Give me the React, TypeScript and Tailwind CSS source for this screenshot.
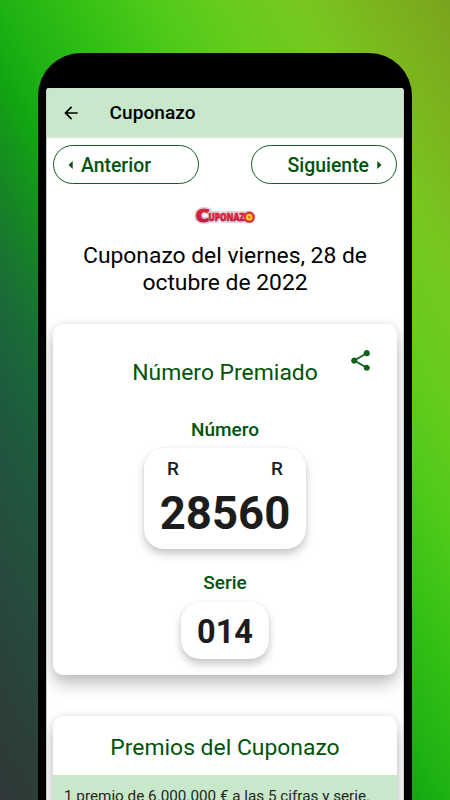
import { MdArrowBack, MdShare } from "react-icons/md";

const cardShadow = "shadow-[0_9px_16px_rgba(0,0,0,0.24),0_0_8px_rgba(0,0,0,0.08)]";
const boxShadow = "shadow-[0_5px_9px_rgba(0,0,0,0.22),0_0_3px_rgba(0,0,0,0.06)]";

function CuponazoLogo() {
	return (
		<svg width="64" height="22" viewBox="0 0 64 22" className="mx-auto block overflow-visible" fontFamily="'Open Sans', sans-serif" fontWeight="800">
			<defs>
				<linearGradient id="logo-red" x1="0" y1="0" x2="0" y2="1">
					<stop offset="0.3" stopColor="#dc2236" />
					<stop offset="1" stopColor="#b01a5c" />
				</linearGradient>
			</defs>
			<g stroke="#dcd8de" strokeWidth="4" strokeLinejoin="round" fill="#dcd8de">
				<text x="2.6" y="17.4" fontSize="18" textLength="14" lengthAdjust="spacingAndGlyphs">C</text>
				<text x="15.5" y="16.4" fontSize="10" textLength="36" lengthAdjust="spacingAndGlyphs">UPONAZ</text>
				<circle cx="56.2" cy="12" r="4.6" />
			</g>
			<g fill="url(#logo-red)" stroke="url(#logo-red)">
				<text x="2.6" y="17.4" fontSize="18" strokeWidth="0.9" textLength="14" lengthAdjust="spacingAndGlyphs">C</text>
				<text x="15.5" y="16.4" fontSize="10" strokeWidth="0.7" textLength="36" lengthAdjust="spacingAndGlyphs">UPONAZ</text>
			</g>
			<circle cx="56.2" cy="12.2" r="4.5" fill="#f8d32a" stroke="#dc2a2f" strokeWidth="2.2" />
			<circle cx="56.2" cy="12.2" r="1" fill="#dc2a2f" />
		</svg>
	);
}

export default function App() {
	return (
		<div className="h-[800px] w-[450px] overflow-hidden bg-[linear-gradient(to_top_right,#2e3838_0%,#2c3e38_6%,#264c3d_15.6%,#1e5a3e_25%,#1a6b38_32%,#168525_38.7%,#12a512_45.3%,#1fb213_50%,#34c015_58.3%,#50ca1a_66.7%,#68cc1c_75%,#77c720_83.3%,#7cb41e_91.7%,#7ba31e_100%)] pt-[53px] font-['Roboto',sans-serif]">
			<div className="mx-auto h-[900px] w-[374px] rounded-t-[43px] bg-black px-2 pt-[35px]">
				<main className="h-full overflow-hidden rounded-t-[3px] border-x border-[#c9c9c9] bg-white">
					{/* App bar */}
					<header className="flex h-[49px] items-center bg-[#c9e7cb] pl-[14px] shadow-[0_1px_2px_rgba(0,0,0,0.14)]">
						<MdArrowBack className="size-5 text-black" />
						<h1 className="ml-[28.5px] pt-[2px] text-[19px] font-medium tracking-[0.1px] text-black">Cuponazo</h1>
					</header>

					{/* Draw navigation */}
					<nav className="mt-2 flex justify-between px-[6px] text-[19.4px] font-medium text-[#00530a]">
						<button className="flex h-[39px] w-[146px] items-center rounded-full border border-[#10601c] pl-[14px]">
							<svg width="5" height="8" viewBox="0 0 5 8" fill="currentColor"><path d="M4.7 0v8L0.5 4z" /></svg>
							<span className="ml-2 pt-[3px]">Anterior</span>
						</button>
						<button className="flex h-[39px] w-[146px] items-center justify-end rounded-full border border-[#10601c] pr-[14px]">
							<span className="mr-2 pt-[3px]">Siguiente</span>
							<svg width="5" height="8" viewBox="0 0 5 8" fill="currentColor"><path d="M0.3 0v8l4.2-4z" /></svg>
						</button>
					</nav>

					<div className="mt-[21px]">
						<CuponazoLogo />
					</div>
					<h2 className="mt-4 text-center text-[22.85px] leading-[26.5px] text-black">
						Cuponazo del viernes, 28 de
						<br />
						octubre de 2022
					</h2>

					{/* Winning number */}
					<section className={`mx-[6px] mt-7 h-[351px] rounded-[10px] bg-white pt-[34px] text-center ${cardShadow}`}>
						<div className="relative">
							<h3 className="text-[22.9px] leading-[30px] text-[#00530a]">Número Premiado</h3>
							<MdShare className="absolute -top-[10px] right-[24px] size-[25px] text-[#10601c]" />
						</div>
						<p className="mt-[30px] text-[19px] leading-6 font-medium text-[#00530a]">Número</p>
						<div className={`mx-auto mt-[6px] h-[101px] w-[162px] rounded-[20px] bg-white pt-[9px] ${boxShadow}`}>
							<div className="flex justify-between px-[23px] text-[19px] leading-6 font-medium text-[#1c1c1c]">
								<span>R</span>
								<span>R</span>
							</div>
							<p className="text-[45.5px] leading-[66px] font-bold text-[#1c1c1c]">28560</p>
						</div>
						<p className="mt-[22px] text-[19px] leading-6 font-medium text-[#00530a]">Serie</p>
						<div className={`mx-auto mt-[7px] h-[57px] w-[88px] rounded-[19px] bg-white ${boxShadow}`}>
							<p className="text-[32.5px] leading-[61px] font-bold text-[#1c1c1c]">014</p>
						</div>
					</section>

					{/* Prize list */}
					<section className={`mx-[6px] mt-[41px] h-[300px] overflow-hidden rounded-t-[10px] bg-white ${cardShadow}`}>
						<h3 className="h-[59px] text-center text-[22.9px] leading-[63px] text-[#00530a]">Premios del Cuponazo</h3>
						<p className="h-[60px] bg-[#c9e7cb] pt-[10px] pl-[11px] text-[15.25px] leading-[22px] whitespace-nowrap text-[#202a20]">1 premio de 6.000.000 € a las 5 cifras y serie.</p>
					</section>
				</main>
			</div>
		</div>
	);
}
